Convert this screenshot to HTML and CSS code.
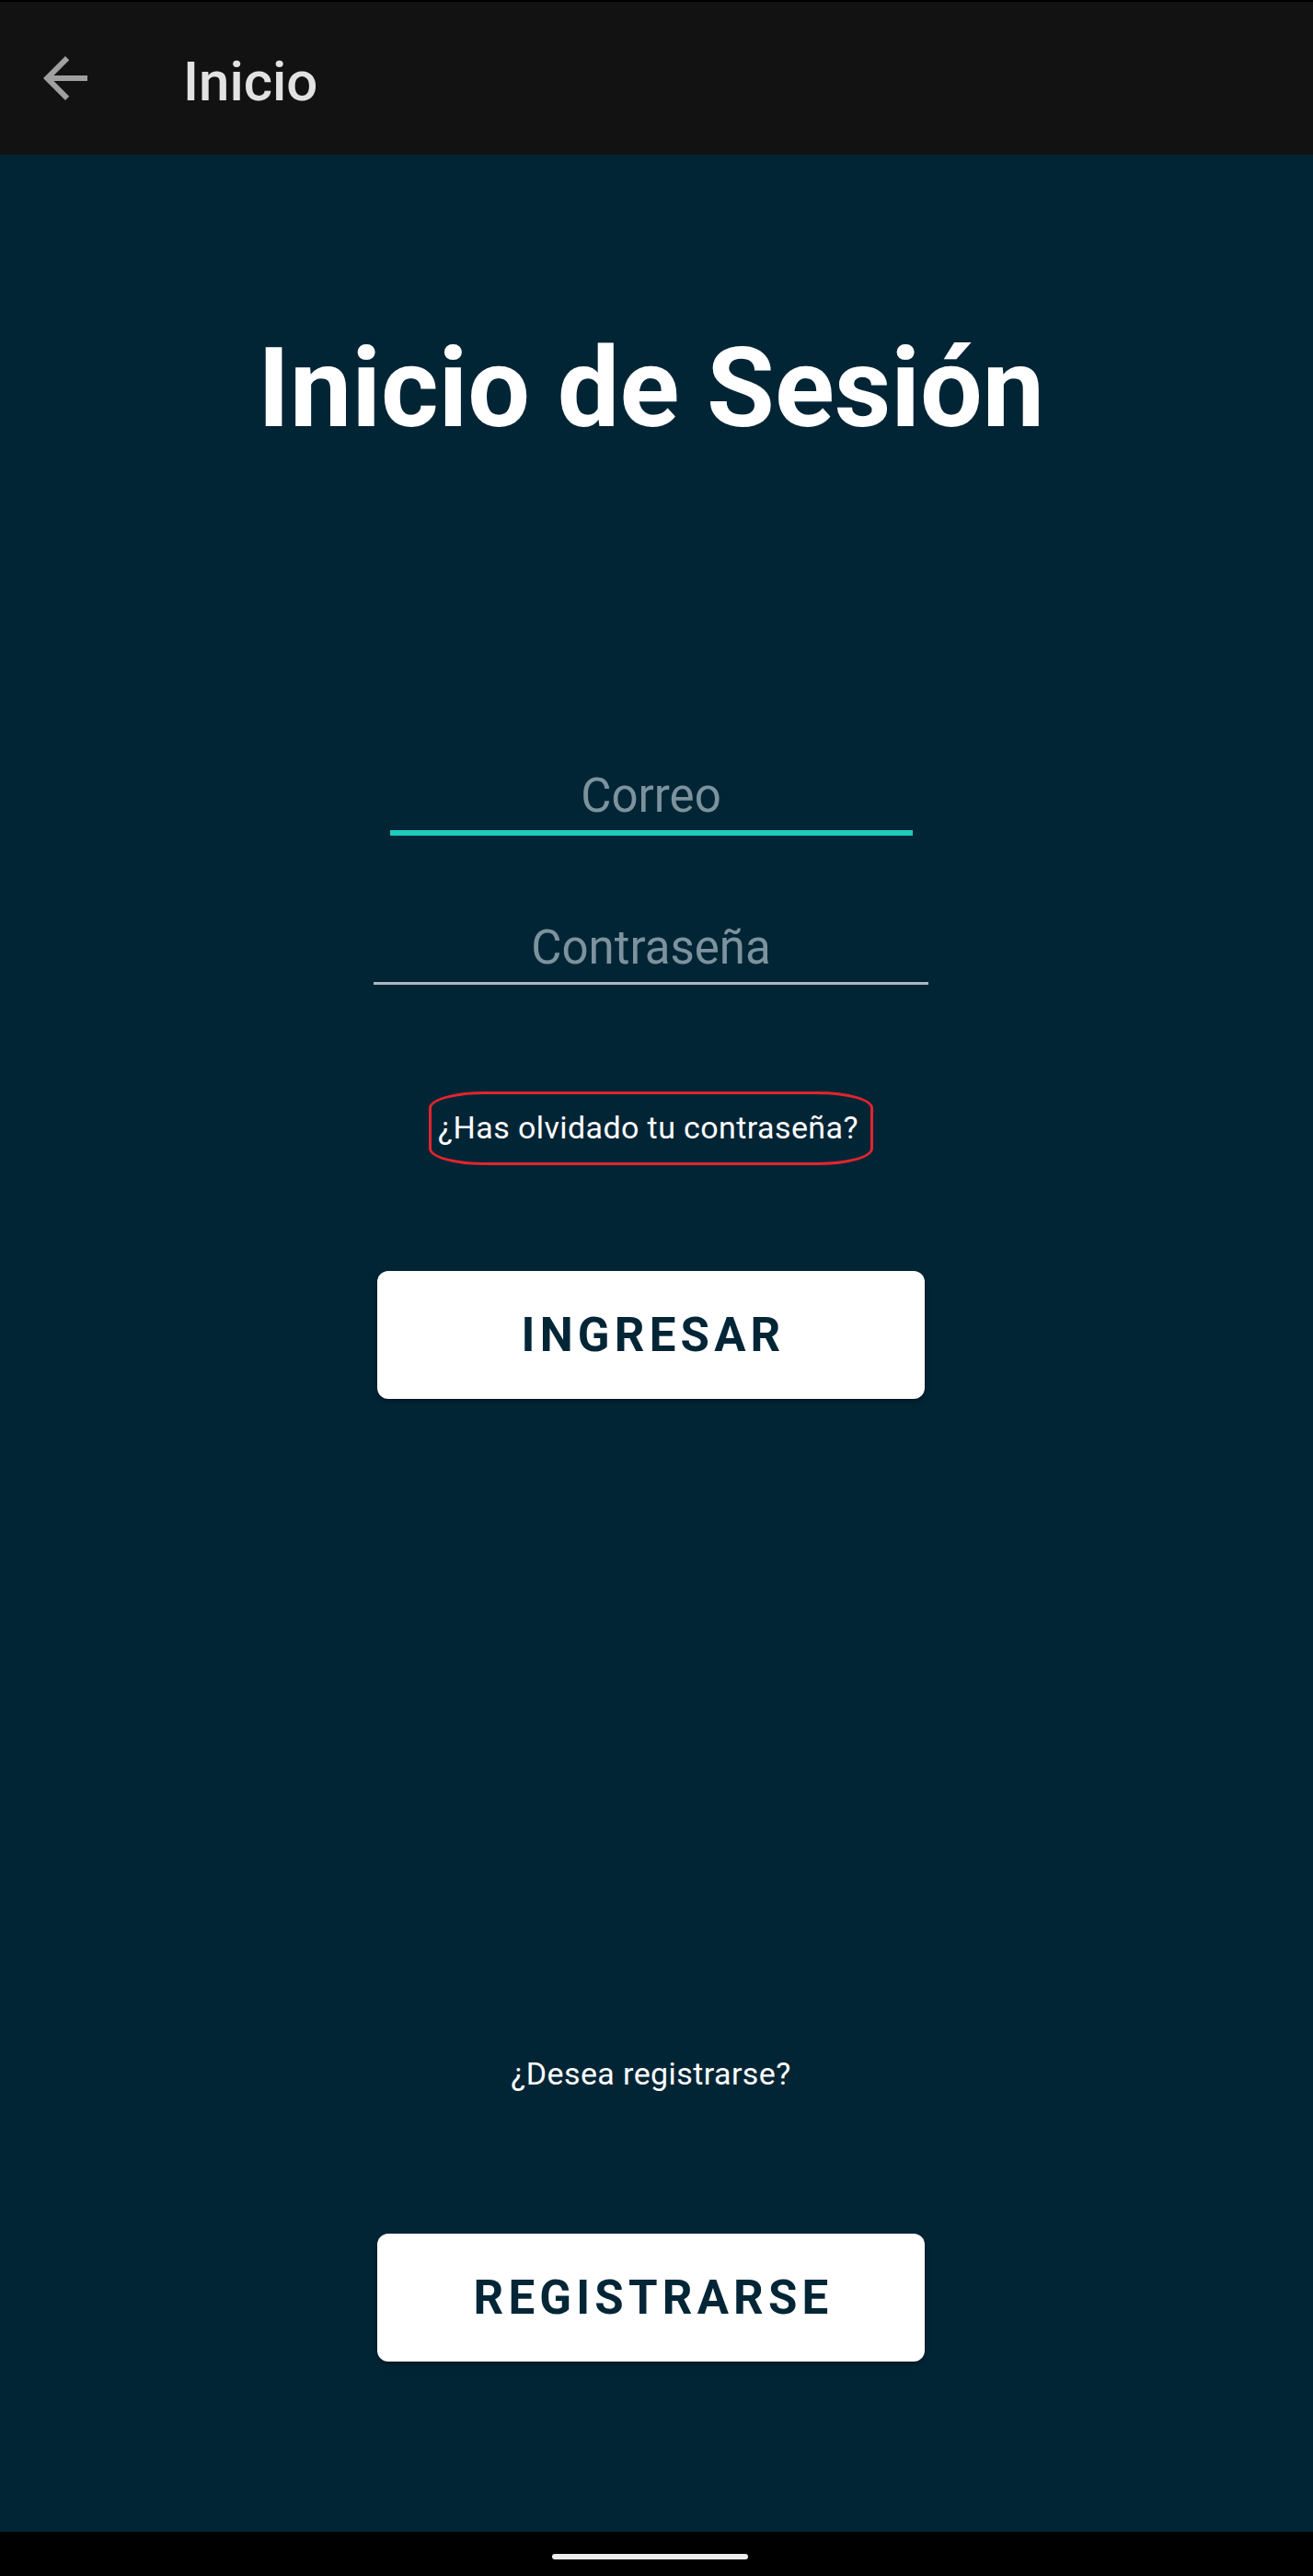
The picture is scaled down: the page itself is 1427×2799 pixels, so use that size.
FILE: index.html
```html
<!DOCTYPE html>
<html lang="es">
<head>
<meta charset="utf-8">
<title>Inicio</title>
<link rel="stylesheet" href="styles.css">
</head>
<body>
<header class="appbar">
  <svg class="back" viewBox="0 0 24 24" aria-hidden="true"><path d="M20 11H7.830l5.590-5.590L12 4l-8 8 8 8 1.410-1.410L7.830 13H20v-2z"/></svg>
  <span class="appbar-title">Inicio</span>
</header>
<main class="login">
  <h1 class="login-title">Inicio de Sesión</h1>
  <div class="field field-email field-active">Correo</div>
  <div class="field field-pass">Contraseña</div>
  <a class="forgot" href="#">¿Has olvidado tu contraseña?</a>
  <button class="btn btn-login">INGRESAR</button>
  <p class="register-q">¿Desea registrarse?</p>
  <button class="btn btn-register">REGISTRARSE</button>
</main>
<nav class="navbar"><span class="handle"></span></nav>
</body>
</html>
```
FILE: styles.css
```css
html, body {
  margin: 0;
  padding: 0;
}
body {
  width: 1427px;
  background: #022536;
  font-family: Roboto, "Noto Sans", "Liberation Sans", sans-serif;
}
.appbar {
  box-sizing: border-box;
  height: 168px;
  border-top: 2px solid #000;
  background: #121212;
  display: flex;
  align-items: center;
  padding-left: 35px;
}
.back {
  width: 72px;
  height: 72px;
  fill: #a0a0a0;
  flex: none;
}
.appbar-title {
  margin-left: 92px;
  margin-top: 7px;
  font-size: 60px;
  line-height: 70px;
  font-weight: 500;
  color: #e2e2e2;
}
.login {
  box-sizing: border-box;
  height: 2583px;
  padding-right: 12px;
  display: flex;
  flex-direction: column;
  align-items: center;
}
.login-title {
  margin: 184px 0 0;
  font-size: 120px;
  line-height: 140px;
  font-weight: 700;
  color: #ffffff;
}
.field {
  font-size: 51px;
  line-height: 61px;
  color: #7c939e;
  text-align: center;
  padding-bottom: 7px;
}
.field-email {
  margin-top: 342px;
  width: 568px;
  border-bottom: 6px solid #1dccbb;
}
.field-pass {
  margin-top: 91px;
  width: 603px;
  border-bottom: 3px solid #a9b8c0;
}
.forgot {
  box-sizing: border-box;
  display: block;
  margin-top: 116px;
  width: 483px;
  height: 80px;
  padding: 16px 6px 0 0;
  border: 3px solid #e3242d;
  border-radius: 60px / 18px;
  font-size: 34px;
  line-height: 40px;
  letter-spacing: 0.4px;
  color: #ffffff;
  text-align: center;
  text-decoration: none;
}
.btn {
  box-sizing: border-box;
  display: block;
  width: 595px;
  height: 139px;
  padding: 0 0 0 5px;
  border: none;
  border-radius: 12px;
  background: #ffffff;
  box-shadow: 0 3px 5px rgba(0, 0, 0, 0.35);
  font-family: Roboto, "Noto Sans", "Liberation Sans", sans-serif;
  font-size: 51px;
  line-height: 58px;
  font-weight: 700;
  letter-spacing: 5.2px;
  color: #032637;
  text-align: center;
}
.btn-login {
  margin-top: 115px;
}
.register-q {
  margin: 713px 0 0;
  font-size: 34px;
  line-height: 40px;
  letter-spacing: 0.4px;
  color: #ffffff;
}
.btn-register {
  margin-top: 154px;
}
.navbar {
  box-sizing: border-box;
  height: 48px;
  background: #000;
  display: flex;
  justify-content: center;
  padding-top: 24px;
  padding-right: 15px;
}
.handle {
  display: block;
  width: 213px;
  height: 6px;
  border-radius: 3px;
  background: #ececec;
}
```
